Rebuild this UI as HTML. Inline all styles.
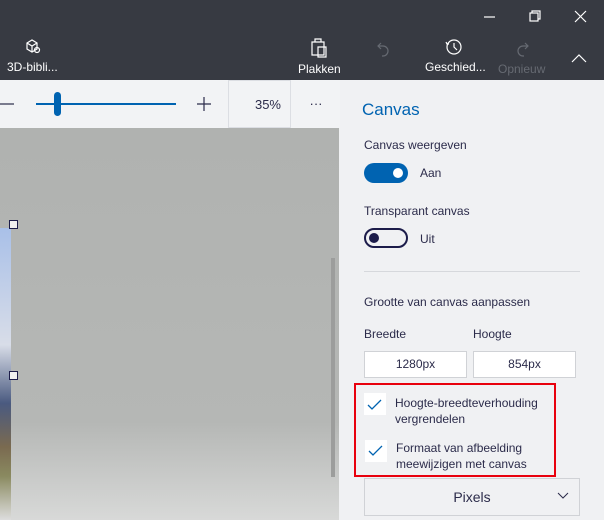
<!DOCTYPE html>
<html><head><meta charset="utf-8"><style>
*{margin:0;padding:0;box-sizing:border-box}
body{width:604px;height:520px;overflow:hidden;position:relative;font-family:"Liberation Sans",sans-serif;background:#f0f1f3}
.a{position:absolute}
.top{left:0;top:0;width:604px;height:80px;background:#373a42;color:#fff}
.lbl{font-size:12px;color:#fff;white-space:nowrap}
.t{font-size:12px;color:#2b2b4a;white-space:nowrap}
</style></head><body>
<div class="a top">
 <svg class="a" style="left:0;top:0" width="604" height="80" fill="none" stroke="#fff" stroke-width="1.2">
  <line x1="484" y1="17" x2="495" y2="17"/>
  <rect x="530" y="13" width="8" height="8"/><path d="M532 13v-2h8v8h-2"/>
  <path d="M575 11l11 11M586 11l-11 11"/>
  <path d="M27 43l5-3 5 3v6l-5 3-5-3z M27 43l5 3 5-3 M32 46v6"/><circle cx="37" cy="50" r="2.5"/>
  <path d="M312 42h12v13h-12z M315 42v-3h6v3 M318 47h8v10h-8z"/>
  <path stroke="#666a72" d="M381 43l-3 3 3 3 M378 46h5a5 5 0 0 1 0 10h-1"/>
  <circle cx="454" cy="47" r="7"/><path d="M454 43v4l3 3 M446 42l1 2 2 0"/>
  <path stroke="#666a72" d="M525 43l3 3-3 3 M528 46h-5a5 5 0 0 0 0 10h1"/>
  <path d="M572 62l7-7 7 7"/>
 </svg>
 <div class="a lbl" style="left:7px;top:60px">3D-bibli...</div>
 <div class="a lbl" style="left:298px;top:62px">Plakken</div>
 <div class="a lbl" style="left:425px;top:60px">Geschied...</div>
 <div class="a lbl" style="left:498px;top:62px;color:#666a72">Opnieuw</div>
</div>
<div class="a" style="left:0;top:80px;width:340px;height:48px;background:#f2f3f5"></div>
<svg class="a" style="left:0;top:80px" width="340" height="48">
 <line x1="0" y1="24" x2="14" y2="24" stroke="#2b2b4a" stroke-width="1.2"/>
 <line x1="36" y1="24" x2="176" y2="24" stroke="#0063b1" stroke-width="2"/>
 <rect x="54" y="12" width="7" height="24" rx="3.5" fill="#0063b1"/>
 <path d="M197 24h14M204 17v14" stroke="#2b2b4a" stroke-width="1.2"/>
 <rect x="228.5" y="0.5" width="62" height="47" fill="none" stroke="#dcdee3"/>
 <text x="281" y="29" font-size="13" fill="#2b2b4a" text-anchor="end" font-family="Liberation Sans">35%</text>
 <text x="316" y="28" font-size="13" fill="#2b2b4a" text-anchor="middle" font-family="Liberation Sans">···</text>
</svg>
<div class="a" style="left:362px;top:100px;font-size:17px;color:#0063b1">Canvas</div>
<div class="a" style="left:0;top:128px;width:339px;height:392px;background:linear-gradient(180deg,#b0b2b0 0%,#b5b7b5 75%,#d8d9d8 100%)"></div>
<div class="a" style="left:0;top:228px;width:11px;height:292px;background:linear-gradient(180deg,#a9c0e8 0%,#d8dde8 40%,#4a5a80 60%,#7a6a50 75%,#8a8a60 85%,#ddd 100%)"></div>
<div class="a" style="left:9px;top:220px;width:9px;height:9px;border:1px solid #1c1c4a;background:#f0f0f0"></div>
<div class="a" style="left:9px;top:371px;width:9px;height:9px;border:1px solid #1c1c4a;background:#f0f0f0"></div>
<div class="a" style="left:331px;top:258px;width:4px;height:219px;background:#9c9d9c"></div>
<div class="a t" style="left:364px;top:138px">Canvas weergeven</div>
<div class="a" style="left:364px;top:163px;width:44px;height:20px;border-radius:10px;background:#0063b1"></div>
<div class="a" style="left:393px;top:168px;width:10px;height:10px;border-radius:5px;background:#fff"></div>
<div class="a t" style="left:420px;top:166px">Aan</div>
<div class="a t" style="left:364px;top:204px">Transparant canvas</div>
<div class="a" style="left:364px;top:228px;width:44px;height:20px;border-radius:10px;border:2px solid #1c1c4a"></div>
<div class="a" style="left:369px;top:233px;width:10px;height:10px;border-radius:5px;background:#1c1c4a"></div>
<div class="a t" style="left:420px;top:232px">Uit</div>
<div class="a" style="left:364px;top:271px;width:216px;height:1px;background:#d6d8dc"></div>
<div class="a t" style="left:364px;top:295px">Grootte van canvas aanpassen</div>
<div class="a t" style="left:364px;top:327px">Breedte</div>
<div class="a t" style="left:473px;top:327px">Hoogte</div>
<div class="a t" style="left:364px;top:351px;width:103px;height:27px;border:1px solid #d0d2d6;background:#fff;text-align:center;line-height:25px">1280px</div>
<div class="a t" style="left:473px;top:351px;width:103px;height:27px;border:1px solid #d0d2d6;background:#fff;text-align:center;line-height:25px">854px</div>
<div class="a" style="left:354px;top:383px;width:202px;height:94px;border:2px solid #e8000d"></div>
<div class="a" style="left:364px;top:393px;width:22px;height:22px;background:#fff"></div>
<div class="a" style="left:365px;top:440px;width:22px;height:22px;background:#fff"></div>
<svg class="a" style="left:0;top:0" width="604" height="520" fill="none" stroke="#0063b1" stroke-width="1.3">
 <path d="M368 405l4 4 9-9"/><path d="M369 451l4 4 9-9"/>
 <path d="M558 493l5 5 5-5" stroke="#2b2b4a" stroke-width="1"/>
</svg>
<div class="a t" style="left:395px;top:395px;line-height:16px">Hoogte-breedteverhouding<br>vergrendelen</div>
<div class="a t" style="left:396px;top:440px;line-height:16px">Formaat van afbeelding<br>meewijzigen met canvas</div>
<div class="a" style="left:364px;top:478px;width:216px;height:38px;border:1px solid #d0d2d6;text-align:center;line-height:36px;font-size:14px;color:#2b2b4a">Pixels</div>
</body></html>
